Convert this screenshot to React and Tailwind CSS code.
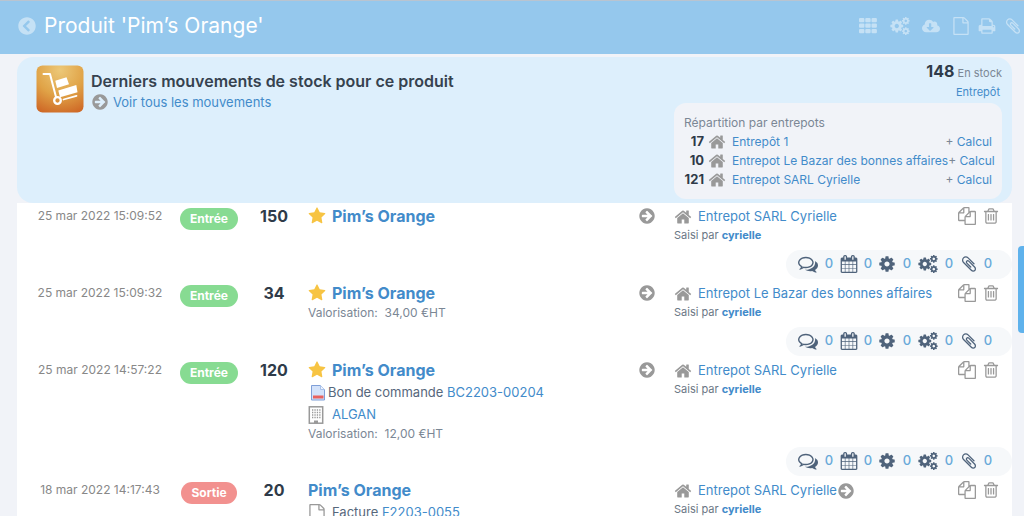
import React from 'react';
import { FaChevronCircleLeft, FaCloudDownloadAlt } from 'react-icons/fa';

const PATHS = {
  file: 'M1596 380q28 28 48 76t20 88v1152q0 40-28 68t-68 28h-1344q-40 0-68-28t-28-68v-1600q0-40 28-68t68-28h896q40 0 88 20t76 48zm-444-244v376h376q-10-29-22-41l-313-313q-12-12-41-22zm384 1528v-1024h-416q-40 0-68-28t-28-68v-416h-768v1536h1280z',
  home: 'M1472 992v480q0 26-19 45t-45 19h-384v-384h-256v384h-384q-26 0-45-19t-19-45v-480q0-1 .5-3t.5-3l575-474 575 474q1 2 1 6zm223-69l-62 74q-8 9-21 11h-3q-13 0-21-7l-692-577-692 577q-12 8-24 7-13-2-21-11l-62-74q-8-10-7-23.5t11-21.5l719-599q32-26 76-26t76 26l244 204v-195q0-14 9-23t23-9h192q14 0 23 9t9 23v408l219 182q10 8 11 21.5t-7 23.5z',
  arrow: 'M1413 896q0-27-18-45l-91-91-362-362q-18-18-45-18t-45 18l-91 91q-18 18-18 45t18 45l189 189h-502q-26 0-45 19t-19 45v128q0 26 19 45t45 19h502l-189 189q-18 18-18 45t18 45l91 91q18 18 45 18t45-18l362-362 91-91q18-18 18-45zm251 0q0 209-103 385.5t-279.5 279.5-385.5 103-385.5-103-279.5-279.5-103-385.5 103-385.5 279.5-279.5 385.5-103 385.5 103 279.5 279.5 103 385.5z',
  cog: 'M1152 896q0-106-75-181t-181-75-181 75-75 181 75 181 181 75 181-75 75-181zm512-109v222q0 12-8 23t-20 13l-185 28q-19 54-39 91 35 50 107 138 10 12 10 25t-9 23q-27 37-99 108t-94 71q-12 0-26-9l-138-108q-44 23-91 38-16 136-29 186-7 28-36 28h-222q-14 0-24.5-8.5t-11.5-21.5l-28-184q-49-16-90-37l-141 107q-10 9-25 9-14 0-25-11-126-114-165-168-7-10-7-23 0-12 8-23 15-21 51-66.5t54-70.5q-27-50-41-99l-183-27q-13-2-21-12.5t-8-23.5v-222q0-12 8-23t19-13l186-28q14-46 39-92-40-57-107-138-10-12-10-24 0-10 9-23 26-36 98.5-107.5t94.5-71.5q13 0 26 10l138 107q44-23 91-38 16-136 29-186 7-28 36-28h222q14 0 24.5 8.5t11.5 21.5l28 184q49 16 90 37l142-107q9-9 24-9 13 0 25 10 129 119 165 170 7 8 7 22 0 12-8 23-15 21-51 66.5t-54 70.5q26 50 41 98l183 28q13 2 21 12.5t8 23.5z',
  star: 'M1728 647q0 22-26 48l-363 354 86 500q1 7 1 20 0 21-10.5 35.5t-30.5 14.5q-19 0-40-12l-449-236-449 236q-22 12-40 12-21 0-31.5-14.5t-10.5-35.5q0-6 2-20l86-500-364-354q-25-27-25-48 0-37 56-46l502-73 225-455q19-41 49-41t49 41l225 455 502 73q56 9 56 46z',
  trash: 'M704 736v576q0 14-9 23t-23 9h-64q-14 0-23-9t-9-23v-576q0-14 9-23t23-9h64q14 0 23 9t9 23zm256 0v576q0 14-9 23t-23 9h-64q-14 0-23-9t-9-23v-576q0-14 9-23t23-9h64q14 0 23 9t9 23zm256 0v576q0 14-9 23t-23 9h-64q-14 0-23-9t-9-23v-576q0-14 9-23t23-9h64q14 0 23 9t9 23zm128 724v-948h-896v948q0 22 7 40.5t14.5 27 10.5 8.5h832q3 0 10.5-8.5t14.5-27 7-40.5zm-672-1076h448l-48-117q-7-9-17-11h-317q-10 2-17 11zm928 32v64q0 14-9 23t-23 9h-96v948q0 83-47 143.5t-113 60.5h-832q-66 0-113-58.5t-47-141.5v-952h-96q-14 0-23-9t-9-23v-64q0-14 9-23t23-9h309l70-167q15-37 54-63t79-26h320q40 0 79 26t54 63l70 167h309q14 0 23 9t9 23z',
  copy: 'M1696 384q40 0 68 28t28 68v1216q0 40-28 68t-68 28h-960q-40 0-68-28t-28-68v-288h-544q-40 0-68-28t-28-68v-672q0-40 20-88t48-76l408-408q28-28 76-48t88-20h416q40 0 68 28t28 68v328q68-40 128-40h416zm-544 213l-299 299h299v-299zm-640-384l-299 299h299v-299zm196 647l316-316v-416h-384v416q0 40-28 68t-68 28h-416v640h512v-256q0-40 20-88t48-76zm956 804v-1152h-384v416q0 40-28 68t-68 28h-416v640h896z',
  clip: 'M1596 1385q0 117-79 196t-196 79q-135 0-235-100l-777-776q-113-115-113-271 0-159 110-270t269-111q158 0 273 113l605 606q10 10 10 22 0 16-30.5 46.5t-46.5 30.5q-13 0-23-10l-606-607q-79-77-181-77-106 0-179 75t-73 181q0 105 76 181l776 777q63 63 145 63 64 0 106-42t42-106q0-82-63-145l-581-581q-26-24-60-24-29 0-48 19t-19 48q0 32 25 59l410 410q10 10 10 22 0 16-31 47t-47 31q-12 0-22-10l-410-410q-63-61-63-149 0-82 57-139t139-57q88 0 149 63l581 581q100 98 100 235z',
  calendar: 'M192 1664h288v-288h-288v288zm352 0h320v-288h-320v288zm-352-352h288v-320h-288v320zm352 0h320v-320h-320v320zm-352-384h288v-288h-288v288zm736 736h320v-288h-320v288zm-384-736h320v-288h-320v288zm768 736h288v-288h-288v288zm-384-352h320v-320h-320v320zm-352-864v-288q0-13-9.5-22.5t-22.5-9.5h-64q-13 0-22.5 9.5t-9.5 22.5v288q0 13 9.5 22.5t22.5 9.5h64q13 0 22.5-9.5t9.5-22.5zm736 864h288v-320h-288v320zm-384-384h320v-288h-320v288zm384 0h288v-288h-288v288zm32-480v-288q0-13-9.5-22.5t-22.5-9.5h-64q-13 0-22.5 9.5t-9.5 22.5v288q0 13 9.5 22.5t22.5 9.5h64q13 0 22.5-9.5t9.5-22.5zm384-64v1280q0 52-38 90t-90 38h-1408q-52 0-90-38t-38-90v-1280q0-52 38-90t90-38h128v-96q0-66 47-113t113-47h64q66 0 113 47t47 113v96h384v-96q0-66 47-113t113-47h64q66 0 113 47t47 113v96h128q52 0 90 38t38 90z',
  comments: 'M704 384q-153 0-286 52t-211.5 141-78.5 191q0 82 53 158t149 132l97 56-35 84q34-20 62-39l44-31 53 10q78 14 153 14 153 0 286-52t211.5-141 78.5-191-78.5-191-211.5-141-286-52zm0-128q191 0 353.5 68.5t256.5 186.5 94 257-94 257-256.5 186.5-353.5 68.5q-86 0-176-16-124 88-278 128-36 9-86 16h-3q-11 0-20.5-8t-11.5-21q-1-3-1-6.5t.5-6.5 2-6l2.5-5 3.5-5.5 4-5 4.5-5 4-4.5q5-6 23-25t26-29.5 22.5-29 25-38.5 20.5-44q-124-72-195-177t-71-224q0-139 94-257t256.5-186.5 353.5-68.5zm822 1169q10 24 20.5 44t25 38.5 22.5 29 26 29.5 23 25q1 1 4 4.5t4.5 5 4 5 3.5 5.5l2.5 5 2 6 .5 6.5-1 6.5q-3 14-13 22t-22 7q-50-7-86-16-154-40-278-128-90 16-176 16-271 0-472-132 58 4 88 4 161 0 309-45t264-129q125-92 192-212t67-254q0-77-23-152 129 71 204 178t75 230q0 120-71 224.5t-195 176.5z',
  print: 'M448 1536h896v-256h-896v256zm0-640h896v-384h-160q-40 0-68-28t-28-68v-160h-640v640zm1152 64q0-26-19-45t-45-19-45 19-19 45 19 45 45 19 45-19 19-45zm128 0v416q0 13-9.5 22.5t-22.5 9.5h-224v160q0 40-28 68t-68 28h-960q-40 0-68-28t-28-68v-160h-224q-13 0-22.5-9.5t-9.5-22.5v-416q0-79 56.5-135.5t135.5-56.5h64v-544q0-40 28-68t68-28h672q40 0 88 20t76 48l152 152q28 28 48 76t20 88v256h64q79 0 135.5 56.5t56.5 135.5z',
};

const Icon = ({ name, className }) => (
  <svg viewBox="0 0 1792 1792" fill="currentColor" aria-hidden="true" className={`shrink-0 ${className}`}>
    <path d={PATHS[name]} />
  </svg>
);

const CogsIcon = ({ className }) => (
  <svg viewBox="0 0 1920 1792" fill="currentColor" aria-hidden="true" className={`shrink-0 ${className}`}>
    <path d={PATHS.cog} transform="translate(-106 150) scale(0.833)" />
    <path d={PATHS.cog} transform="translate(1088 -64) scale(0.5)" />
    <path d={PATHS.cog} transform="translate(1088 960) scale(0.5)" />
  </svg>
);

const GridIcon = () => (
  <svg viewBox="0 0 20 16" fill="currentColor" aria-hidden="true" className="w-5 h-4">
    {[0, 5.5, 11].map((y) =>
      [1, 7.25, 13.5].map((x) => <rect key={`${x}-${y}`} x={x} y={y} width="5.4" height="4.2" rx="1" />)
    )}
  </svg>
);

const StockIcon = () => (
  <svg viewBox="0 0 48 48" className="w-12 h-12 shrink-0" aria-hidden="true">
    <defs>
      <radialGradient id="stock" cx="0.5" cy="0.1" r="0.95">
        <stop offset="0" stopColor="#ecc878" />
        <stop offset="0.55" stopColor="#e0a347" />
        <stop offset="1" stopColor="#cf6a27" />
      </radialGradient>
    </defs>
    <rect x="0.5" y="0.5" width="47" height="47" rx="6" fill="url(#stock)" />
    <path d="M7.500 9h6.500l6 23" fill="none" stroke="#fff" strokeWidth="2" strokeLinecap="round" strokeLinejoin="round" />
    <circle cx="21.500" cy="35.500" r="3.300" fill="none" stroke="#fff" strokeWidth="2.300" />
    <path d="M27.500 34.500l13-3.700" stroke="#fff" strokeWidth="1.800" strokeLinecap="round" />
    <path d="M19.300 15.800l11.200-3.500 2.500 7-12 3.700zM22.300 25.500l18-5.500 1.200 7.300-17.500 5z" fill="#fff" />
  </svg>
);

const BuildingIcon = () => (
  <svg viewBox="0 0 15 18" className="w-4 h-[18px] shrink-0 text-[#999]" aria-hidden="true">
    <rect x="0.800" y="0.800" width="13.400" height="16.400" fill="none" stroke="currentColor" strokeWidth="1.500" />
    <path d="M3.500 4h9M3.500 6.500h9M3.500 9h9M3.500 11.500h9" stroke="currentColor" strokeWidth="1.300" strokeDasharray="1.300 1.100" />
    <path d="M5.500 17.500v-3h4v3z" fill="currentColor" />
  </svg>
);

const OrderIcon = () => (
  <svg viewBox="0 0 16 18" className="w-4 h-[18px] shrink-0" aria-hidden="true">
    <path d="M1.500 1.500h9l4 4v10.500h-13z" fill="#d3e2fa" stroke="#7f9fd8" />
    <path d="M10.500 1.500v4h4" fill="#eef4fd" stroke="#a9c2ea" />
    <path d="M3 11.500h10.500v3h-10.500z" fill="#e8625f" />
  </svg>
);

const warehouses = [
  { qty: 17, name: 'Entrepôt 1' },
  { qty: 10, name: 'Entrepot Le Bazar des bonnes affaires' },
  { qty: 121, name: 'Entrepot SARL Cyrielle' },
];

const movements = [
  { date: '25 mar 2022 15:09:52', type: 'Entrée', qty: 150, star: true, place: 'Entrepot SARL Cyrielle' },
  { date: '25 mar 2022 15:09:32', type: 'Entrée', qty: 34, star: true, value: '34,00 €HT', place: 'Entrepot Le Bazar des bonnes affaires' },
  { date: '25 mar 2022 14:57:22', type: 'Entrée', qty: 120, star: true, order: 'BC2203-00204', company: 'ALGAN', value: '12,00 €HT', place: 'Entrepot SARL Cyrielle' },
  { date: '18 mar 2022 14:17:43', type: 'Sortie', qty: 20, invoice: 'F2203-0055', place: 'Entrepot SARL Cyrielle' },
];

const Counters = () => (
  <div className="flex justify-end">
    <div className="flex items-center h-[29px] pl-3 pr-3.5 pb-0.5 rounded-full bg-[#f6f8fa] text-[#4f637b] text-[13px] font-medium">
      <Icon name="comments" className="w-5 h-5" />
      <a href="#" className="w-[22px] text-center text-[#68a9d9]">0</a>
      <Icon name="calendar" className="w-[18px] h-[18px]" />
      <a href="#" className="w-5 text-center text-[#68a9d9]">0</a>
      <Icon name="cog" className="w-[18px] h-[18px]" />
      <a href="#" className="w-[22px] text-center text-[#68a9d9]">0</a>
      <CogsIcon className="w-5 h-[18px]" />
      <a href="#" className="w-[22px] text-center text-[#68a9d9]">0</a>
      <Icon name="clip" className="w-[18px] h-[18px]" />
      <a href="#" className="w-5 text-center text-[#68a9d9]">0</a>
    </div>
  </div>
);

const Movement = ({ m }) => (
  <tbody>
    <tr className="align-top h-[47px]">
      <td className="pt-[3px] pl-1.5 text-center text-xs leading-5 text-[#888]">{m.date}</td>
      <td className="pt-[5px]">
        <span className={`block w-fit mx-auto px-2.5 rounded-full text-xs leading-[22px] font-bold text-white ${m.type === 'Entrée' ? 'bg-[#87db92]' : 'bg-[#f2918f]'}`}>
          {m.type}
        </span>
      </td>
      <td className="pt-px text-center text-base leading-6 font-bold text-[#2f3b49]">{m.qty}</td>
      <td className="pt-px pl-px pb-[5px]">
        <div className="flex items-center gap-1.5">
          {m.star && <Icon name="star" className="w-[18px] h-[18px] text-[#f7c443]" />}
          <a href="#" className="text-base leading-6 font-bold text-[#428bca]">Pim’s Orange</a>
        </div>
        {m.order && (
          <div className="flex items-center gap-0.5 h-[22px] pl-0.5 text-[13px] text-[#56677c]">
            <OrderIcon />
            <span>Bon de commande <a href="#" className="text-[#428bca]">{m.order}</a></span>
          </div>
        )}
        {m.company && (
          <div className="flex items-center gap-2 h-[22px] text-[13px]">
            <BuildingIcon />
            <a href="#" className="text-[#428bca]">{m.company}</a>
          </div>
        )}
        {m.invoice && (
          <div className="flex items-center gap-1.5 h-[22px] text-[13px] text-[#56677c]">
            <Icon name="file" className="w-[18px] h-[18px] text-[#999]" />
            <span>Facture <a href="#" className="text-[#428bca]">{m.invoice}</a></span>
          </div>
        )}
        {m.value && <div className="text-xs leading-4 text-[#7b8795]">Valorisation:&nbsp; {m.value}</div>}
      </td>
      <td className="pt-1">{m.star && <Icon name="arrow" className="w-[18px] h-[18px] text-[#999]" />}</td>
      <td className="pt-1">
        <div className="flex items-center h-5 text-[13px] text-[#428bca]">
          <Icon name="home" className="w-[18px] h-[18px] mr-1.5 text-[#999]" />
          <a href="#">{m.place}</a>
          {!m.star && <Icon name="arrow" className="w-[18px] h-[18px] text-[#999]" />}
        </div>
        <div className="text-[11px] leading-4 text-[#6b7785]">
          Saisi par <a href="#" className="font-bold text-[#428bca]">cyrielle</a>
        </div>
      </td>
      <td className="pt-1">
        <div className="flex justify-end gap-1.5 pr-3 text-[#999]">
          <button aria-label="Dupliquer"><Icon name="copy" className="w-[18px] h-[18px]" /></button>
          <button aria-label="Supprimer"><Icon name="trash" className="w-[18px] h-[18px]" /></button>
        </div>
      </td>
    </tr>
    <tr>
      <td colSpan={7} className="h-[30px] align-top"><Counters /></td>
    </tr>
  </tbody>
);

const App = () => {
  return (
    <div className="h-screen overflow-hidden bg-[#f1f3f8] font-['Inter','Noto_Sans',sans-serif]">
      <header className="flex items-center h-[54px] pl-[18px] pr-0.5 pb-1 border-t border-[#b9c4d0] bg-[#95c8ed] text-white overflow-hidden">
        <a href="#" aria-label="Retour" className="text-white/45"><FaChevronCircleLeft className="w-[18px] h-[18px]" /></a>
        <h1 className="ml-2 text-[21px] leading-7 whitespace-nowrap">Produit 'Pim’s Orange'</h1>
        <div className="flex items-center gap-3 ml-auto text-white/45">
          <button aria-label="Modules"><GridIcon /></button>
          <button aria-label="Réglages"><CogsIcon className="w-5 h-[18px]" /></button>
          <button aria-label="Télécharger"><FaCloudDownloadAlt className="w-[18px] h-5" /></button>
          <div className="flex items-center gap-2">
            <button aria-label="Document"><Icon name="file" className="w-[18px] h-[18px]" /></button>
            <button aria-label="Imprimer"><Icon name="print" className="w-[18px] h-[18px]" /></button>
            <button aria-label="Pièces jointes"><Icon name="clip" className="w-[18px] h-[18px]" /></button>
          </div>
        </div>
      </header>

      <div className="flex">
        <main className="flex-1 min-w-0 pt-[3px] pl-[17px] pr-1.5">
          {/* Stock summary */}
          <section className="flex justify-between rounded-2xl bg-[#ddeffc] pl-[19px] pr-2.5 pt-0.5 pb-1">
            <div className="flex items-start gap-[7px] pt-1.5">
              <StockIcon />
              <div className="pt-1">
                <h2 className="text-base leading-6 font-semibold text-[#36424f]">Derniers mouvements de stock pour ce produit</h2>
                <a href="#" className="flex items-center gap-1 text-[13px] leading-4 text-[#428bca]">
                  <Icon name="arrow" className="w-[18px] h-[18px] text-[#999]" />
                  Voir tous les mouvements
                </a>
              </div>
            </div>
            <div className="w-[328px] shrink-0">
              <div className="text-right leading-6 text-[11px] text-[#7b8795]">
                <span className="text-base font-bold text-[#2f3b49]">148</span> En stock
              </div>
              <div className="pr-0.5 mb-1 text-right text-[11px] leading-[14px]"><a href="#" className="text-[#428bca]">Entrepôt</a></div>
              <div className="rounded-xl bg-[#f1f3f8] pt-2.5 pb-2.5 px-2.5 text-xs">
                <p className="leading-[19px] text-[#7b8795]">Répartition par entrepots</p>
                {warehouses.map((w) => (
                  <div key={w.name} className="flex items-center h-[19px] whitespace-nowrap">
                    <span className="w-5 shrink-0 text-right text-[13px] font-bold text-[#2f3b49]">{w.qty}</span>
                    <Icon name="home" className="w-[18px] h-[18px] ml-1 mr-1.5 text-[#999]" />
                    <a href="#" className="text-[#428bca]">{w.name}</a>
                    <span className="ml-auto text-[#7b8795]">+ <a href="#" className="text-[#428bca]">Calcul</a></span>
                  </div>
                ))}
              </div>
            </div>
          </section>

          {/* Movements */}
          <table className="w-full table-fixed border-collapse bg-white">
            <colgroup>
              <col className="w-40" />
              <col className="w-16" />
              <col className="w-[66px]" />
              <col />
              <col className="w-9" />
              <col className="w-[276px]" />
              <col className="w-[62px]" />
            </colgroup>
            {movements.map((m) => <Movement key={m.date} m={m} />)}
          </table>
        </main>
        <div className="w-1.5 shrink-0 pt-[192px]">
          <div className="h-[87px] rounded-l bg-[#5fb2ec]" />
        </div>
      </div>
    </div>
  );
};

export default App;
